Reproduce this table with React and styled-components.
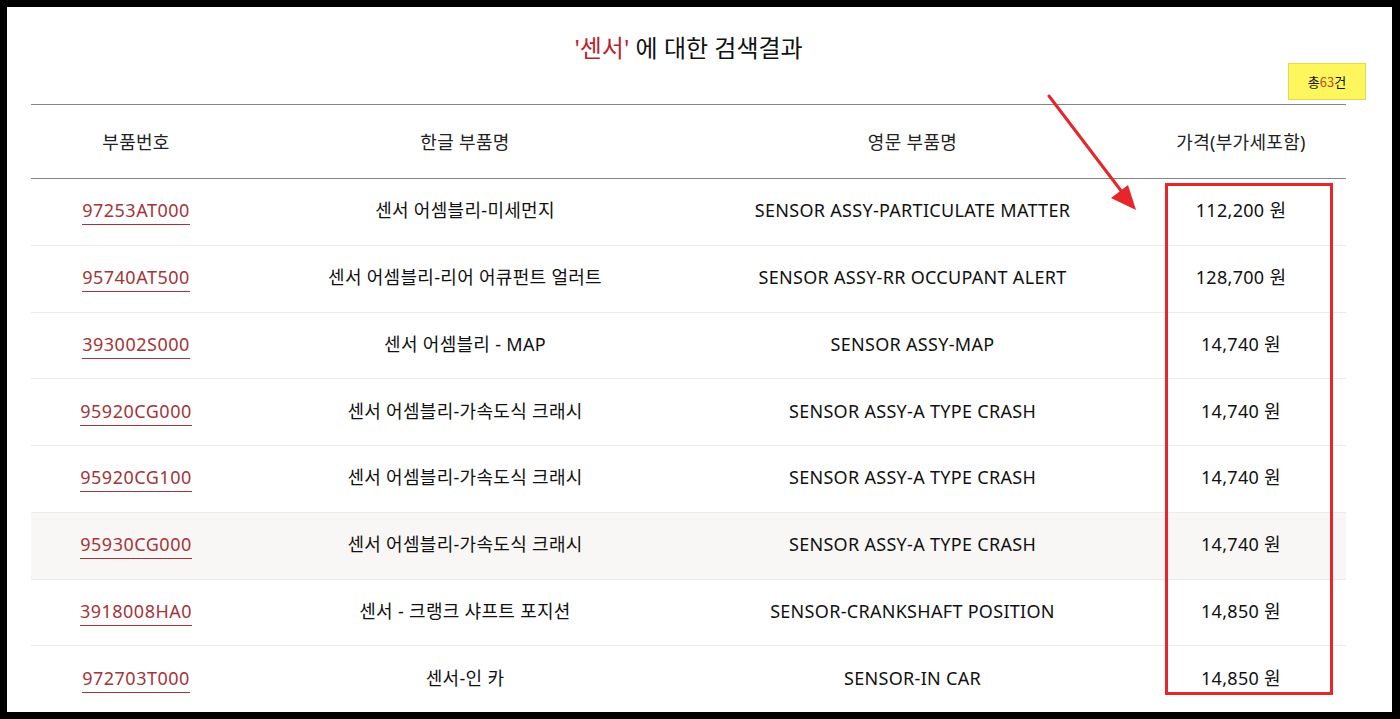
import styled, { createGlobalStyle } from 'styled-components';

const GlobalStyle = createGlobalStyle`
    html, body {
        margin: 0;
        padding: 0;
        background: #000;
    }
    body {
        font-family: "Noto Sans", "Noto Sans CJK KR", sans-serif;
        color: #111;
    }
`;

const Frame = styled.div`
    padding: 7px 8px 7px 7px;
    height: 719px;
    box-sizing: border-box;
`;

const Page = styled.div`
    position: relative;
    background: #fff;
    height: 705px;
    overflow: hidden;
    padding: 24px 46px 0 24px;
    box-sizing: border-box;
`;

const Title = styled.h2`
    margin: 0;
    text-align: center;
    font-size: 24px;
    font-weight: 400;
    line-height: 34px;
    color: #111;
    em {
        font-style: normal;
        color: #b8242c;
    }
`;

const CountRow = styled.div`
    display: flex;
    justify-content: flex-end;
    margin: -2px -20px 4px 0;
`;

const CountBadge = styled.div`
    width: 78px;
    height: 37px;
    box-sizing: border-box;
    display: flex;
    align-items: center;
    justify-content: center;
    background: #fdf65c;
    border: 1px solid #e4d94c;
    font-family: "Noto Sans CJK KR", sans-serif;
    font-size: 13px;
    color: #111;
    b {
        font-weight: 400;
        color: #c9461f;
    }
`;

const Table = styled.div`
    border-top: 1px solid #858585;
`;

const Row = styled.div`
    display: grid;
    grid-template-columns: 210px 448px 1fr 210px;
    align-items: center;
    height: ${p => (p.$head ? '74px' : '66.75px')};
    box-sizing: border-box;
    border-bottom: 1px solid ${p => (p.$head ? '#858585' : '#ebebeb')};
    background: ${p => (p.$hover ? '#f9f7f5' : '#fff')};
    &:last-child {
        border-bottom: none;
    }
`;

const Cell = styled.div`
    text-align: center;
    font-size: 18px;
    line-height: 22px;
    letter-spacing: 0.3px;
    padding-bottom: ${p => (p.$head ? '0' : '3px')};
    color: ${p => (p.$head ? '#222' : '#111')};
    white-space: nowrap;
`;

const PartNo = styled.span`
    display: inline-block;
    color: #a3353a;
    letter-spacing: 0.5px;
    padding-bottom: 3px;
    margin-top: 4px;
    border-bottom: 1px solid #a3353a;
`;

const Mark = styled.svg`
    position: absolute;
    left: -7px;
    top: -7px;
    pointer-events: none;
`;

const rows = [
    ['97253AT000', '센서 어셈블리-미세먼지', 'SENSOR ASSY-PARTICULATE MATTER', '112,200'],
    ['95740AT500', '센서 어셈블리-리어 어큐펀트 얼러트', 'SENSOR ASSY-RR OCCUPANT ALERT', '128,700'],
    ['393002S000', '센서 어셈블리 - MAP', 'SENSOR ASSY-MAP', '14,740'],
    ['95920CG000', '센서 어셈블리-가속도식 크래시', 'SENSOR ASSY-A TYPE CRASH', '14,740'],
    ['95920CG100', '센서 어셈블리-가속도식 크래시', 'SENSOR ASSY-A TYPE CRASH', '14,740'],
    ['95930CG000', '센서 어셈블리-가속도식 크래시', 'SENSOR ASSY-A TYPE CRASH', '14,740'],
    ['3918008HA0', '센서 - 크랭크 샤프트 포지션', 'SENSOR-CRANKSHAFT POSITION', '14,850'],
    ['972703T000', '센서-인 카', 'SENSOR-IN CAR', '14,850'],
];

const App = () => {
    return (
        <Frame>
            <GlobalStyle />
            <Page>
                <Title><em>'센서'</em> 에 대한 검색결과</Title>
                <CountRow>
                    <CountBadge>총<b>63</b>건</CountBadge>
                </CountRow>
                <Table>
                    <Row $head>
                        <Cell $head>부품번호</Cell>
                        <Cell $head>한글 부품명</Cell>
                        <Cell $head>영문 부품명</Cell>
                        <Cell $head>가격(부가세포함)</Cell>
                    </Row>
                    {rows.map((r, i) => (
                        <Row key={r[0]} $hover={i === 5}>
                            <Cell><PartNo>{r[0]}</PartNo></Cell>
                            <Cell>{r[1]}</Cell>
                            <Cell>{r[2]}</Cell>
                            <Cell>{r[3]} 원</Cell>
                        </Row>
                    ))}
                </Table>
                {/* red annotation drawn over the page */}
                <Mark width="1400" height="719" viewBox="0 0 1400 719">
                    <line x1="1049" y1="96" x2="1122" y2="192" stroke="#e5262b" strokeWidth="3" strokeLinecap="round" />
                    <polygon points="1136,210 1111,198 1128,185" fill="#e5262b" />
                    <rect x="1166.5" y="184.5" width="165" height="509" fill="none" stroke="#e5262b" strokeWidth="3" />
                </Mark>
            </Page>
        </Frame>
    );
};

export default App;
